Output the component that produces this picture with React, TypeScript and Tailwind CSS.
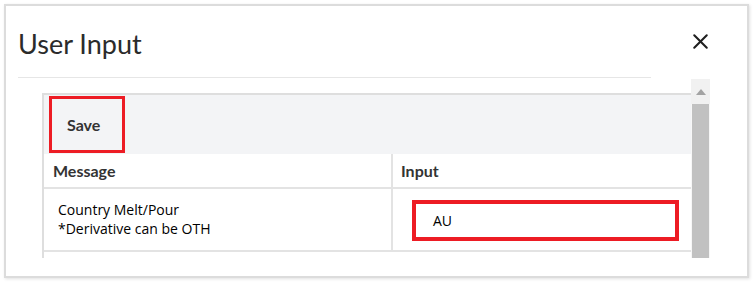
import { X } from "lucide-react";

const lato = { fontFamily: "Lato, 'Open Sans', sans-serif" };

const ScrollBar = () => (
  <div className="w-[19px] h-full flex flex-col bg-[#f7f7f7]">
    <div className="h-[25px] flex items-center justify-center bg-[#f1f1f1]">
      <svg width="10" height="6" viewBox="0 0 10 6">
        <path d="M0 6 L5 0 L10 6 Z" fill="#a3a3a3" />
      </svg>
    </div>
    <div className="flex-1 mx-[1px] bg-[#c1c1c1]" />
  </div>
);

export default function App() {
  return (
    <div className="w-[755px] h-[284px] bg-white pt-[4px] pl-[4px]">
      <div className="w-[745px] h-[274px] border-2 border-[#dcdcdc] shadow-[1px_1px_3px_rgba(0,0,0,0.12)] bg-white flex flex-col">
        <div className="flex items-start h-[72px]">
          <div className="ml-[12px] w-[633px] h-full border-b border-[#e6e6e6] flex items-center">
            <span className="text-[27px] text-[#2b2b2b] leading-none mt-[4px]" style={lato}>
              User Input
            </span>
          </div>
          <div className="ml-[37px] mt-[23px] text-[#1f1f1f]">
            <X size={25} strokeWidth={2} />
          </div>
        </div>
        <div className="ml-[36px] mt-[1px] w-[668px] h-[179px] flex">
          <div className="flex-1 pt-[14px]">
            <div className="h-full border-l-2 border-t-2 border-[#dedede] flex flex-col">
              <div className="h-[59px] bg-[#f3f4f6] pl-[5px] pt-[1px]">
                <div className="w-[76px] h-[57px] border-[3px] border-[#ed1c24] flex items-center pl-[15px]">
                  <span className="text-[16px] font-bold text-[#333]" style={lato}>
                    Save
                  </span>
                </div>
              </div>
              <div className="flex h-[35px] border-b-2 border-[#e3e3e3] text-[16px] font-bold text-[#333]" style={lato}>
                <div className="w-[349px] pl-[9px] flex items-center border-r-2 border-[#e3e3e3]">
                  Message
                </div>
                <div className="flex-1 pl-[8px] flex items-center">Input</div>
              </div>
              <div
                className="flex h-[63px] border-b-2 border-[#e3e3e3] text-[14px] text-black"
                style={{ fontFamily: "'Open Sans', sans-serif" }}
              >
                <div className="w-[349px] pl-[14px] flex flex-col justify-center leading-[19px] border-r-2 border-[#e3e3e3] -mt-[1px]">
                  <span>Country Melt/Pour</span>
                  <span>*Derivative can be OTH</span>
                </div>
                <div className="flex-1 pl-[19px] pt-[11px]">
                  <div className="w-[267px] h-[41px] border-4 border-[#ed1c24] flex items-center pl-[17px]">
                    AU
                  </div>
                </div>
              </div>
            </div>
          </div>
          <ScrollBar />
        </div>
      </div>
    </div>
  );
}
